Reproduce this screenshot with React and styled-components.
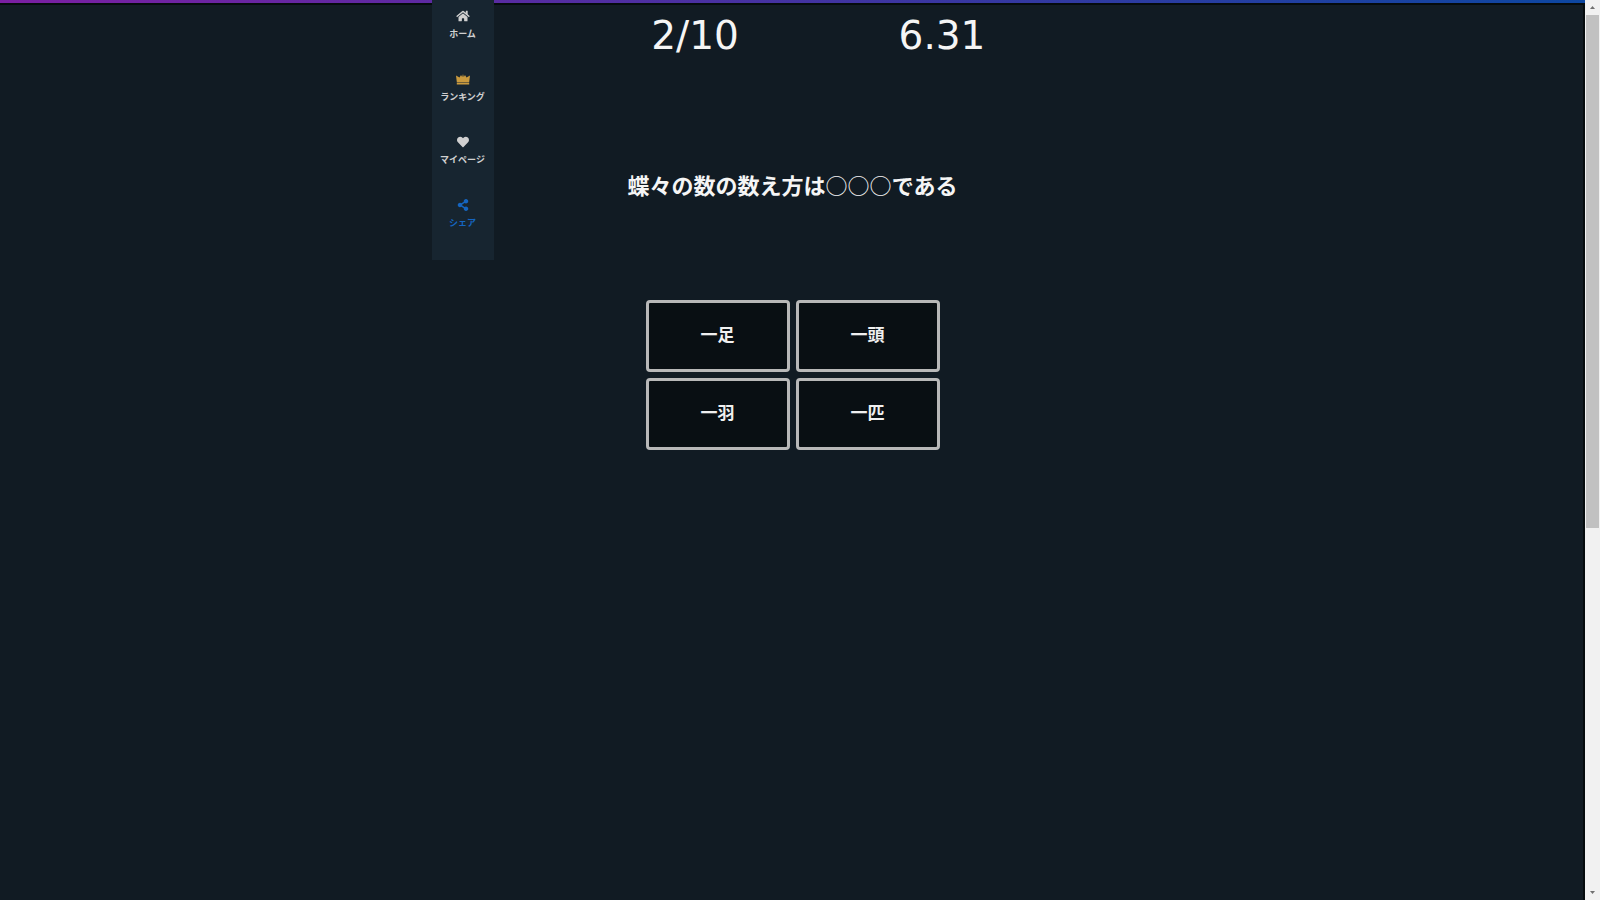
import React from "react";
import { useState } from "react";
import styled, { createGlobalStyle } from "styled-components";
import { FaHome, FaHeart, FaShareAlt } from "react-icons/fa";

const GlobalStyle = createGlobalStyle`
  * {
    box-sizing: border-box;
  }
  body {
    margin: 0;
    background-color: #111b23;
    color: #f5f5f5;
    font-family: "DejaVu Sans", "Noto Sans CJK JP", sans-serif;
  }
`;

const AppContainer = styled.div`
  display: flex;
  min-height: 100vh;
`;
const Page = styled.div`
  flex: 1;
  display: grid;
  grid-template-columns: 1fr 62px minmax(0, 598px) 62px 1fr;
  align-items: start;
  border-top: 3px solid transparent;
  background: linear-gradient(#111b23, #111b23) padding-box,
    linear-gradient(90deg, #7b1fa2, #0d47a1) border-box;
  box-shadow: inset -2px 2px 0 #050b0d;
`;
const SideNav = styled.nav`
  grid-column: 2;
  display: flex;
  flex-direction: column;
  gap: 33px;
  height: 260px;
  margin-top: -3px;
  padding-top: 10px;
  background-color: #172530;
`;
const NavLink = styled.a`
  display: flex;
  flex-direction: column;
  align-items: center;
  gap: 5px;
  color: ${(props) => props.$color || "#d0d0d0"};
  font-family: "Noto Sans CJK JP", sans-serif;
  font-size: 9px;
  font-weight: bold;
  line-height: 13px;
  white-space: nowrap;
  text-decoration: none;

  svg {
    width: 16px;
    height: 12px;
    color: ${(props) => props.$iconColor || "inherit"};
  }
`;
const Quiz = styled.main`
  display: flex;
  flex-direction: column;
  align-items: center;
`;
const Status = styled.div`
  display: grid;
  grid-template-columns: 1fr 1fr;
  width: 100%;
  padding: 9px 26px 0 78px;
  font-size: 39px;
  line-height: 48px;
  text-align: center;
`;
const Question = styled.h1`
  margin: 108px 0 0;
  font-family: "Noto Sans CJK JP", sans-serif;
  font-size: 22px;
  font-weight: bold;
  line-height: 32px;
`;
const Mark = styled.span`
  font-weight: normal;
`;
const Choices = styled.div`
  display: grid;
  grid-template-columns: 144px 144px;
  gap: 6px;
  margin-top: 100px;
`;
const ChoiceButton = styled.button`
  height: 72px;
  padding: 0 0 6px;
  border: 3px solid #b8b8b8;
  border-radius: 4px;
  background-color: #090f13;
  color: #f0f0f0;
  font-family: "Noto Sans CJK JP", sans-serif;
  font-size: 17px;
  font-weight: bold;
  cursor: pointer;
`;
const ScrollTrack = styled.div`
  display: flex;
  flex-direction: column;
  align-items: center;
  width: 15px;
  height: 100vh;
  background-color: #f1f1f1;
`;
const ScrollArrow = styled.svg`
  width: 15px;
  height: 15px;
  fill: #707070;
`;
const ScrollThumb = styled.div`
  flex: 513 0 0;
  width: 13px;
  background-color: #c1c1c1;
`;
const ScrollRest = styled.div`
  flex: 357 0 0;
`;

const CrownIcon = () => (
  <svg viewBox="0 0 16 12" fill="currentColor">
    <path d="M1 2.500l3.500 2L6 2l1.200 2L8 1l.8 3L10 2l1.500 2.500 3.500-2L14.200 9H1.800zM1.800 9.600h12.400V11.500H1.800z" />
  </svg>
);

const navItems = [
  { label: "ホーム", Icon: FaHome },
  { label: "ランキング", Icon: CrownIcon, iconColor: "#c99a3e" },
  { label: "マイページ", Icon: FaHeart },
  { label: "シェア", Icon: FaShareAlt, color: "#1565c0" },
];

const choices = ["一足", "一頭", "一羽", "一匹"];

function App() {
  const [answer, setAnswer] = useState("");

  return (
    <AppContainer>
      <GlobalStyle />
      <Page>
        <SideNav>
          {navItems.map(({ label, Icon, color, iconColor }) => (
            <NavLink href="#" key={label} $color={color} $iconColor={iconColor}>
              <Icon />
              {label}
            </NavLink>
          ))}
        </SideNav>
        <Quiz>
          <Status>
            <span>2/10</span>
            <span>6.31</span>
          </Status>
          <Question>
            蝶々の数の数え方は<Mark>○○○</Mark>である
          </Question>
          <Choices>
            {choices.map((choice) => (
              <ChoiceButton
                key={choice}
                type="button"
                aria-pressed={answer === choice}
                onClick={() => setAnswer(choice)}
              >
                {choice}
              </ChoiceButton>
            ))}
          </Choices>
        </Quiz>
      </Page>
      <ScrollTrack aria-hidden="true">
        <ScrollArrow viewBox="0 0 15 15">
          <path d="M5 9h5L7.5 6z" />
        </ScrollArrow>
        <ScrollThumb />
        <ScrollRest />
        <ScrollArrow viewBox="0 0 15 15">
          <path d="M5 6h5L7.5 9z" />
        </ScrollArrow>
      </ScrollTrack>
    </AppContainer>
  );
}

export default App;
